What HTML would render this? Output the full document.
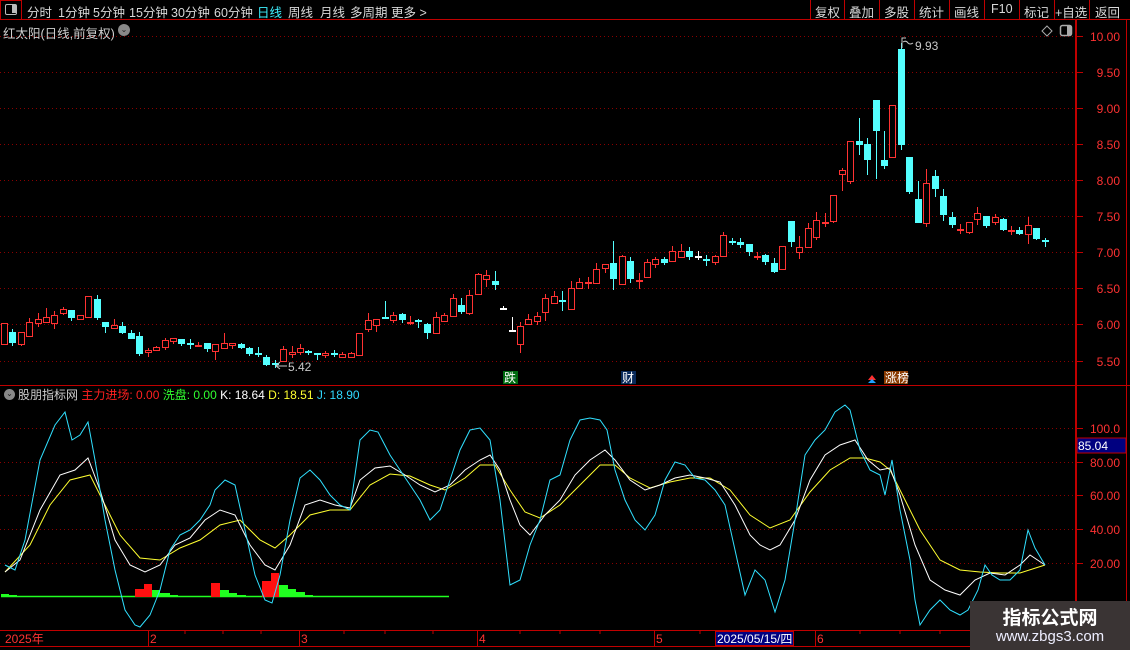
<!DOCTYPE html>
<html><head><meta charset="utf-8">
<style>
*{margin:0;padding:0;box-sizing:border-box}
body{width:1130px;height:650px;background:#000;overflow:hidden;position:relative;font-family:"Liberation Sans","Noto Sans CJK SC",sans-serif;color:#d0d0d0}
.tb{position:absolute;left:0;top:0;width:1130px;height:20px;border-bottom:1px solid #c00000}
.tb span{position:absolute;top:2px;font-size:12.5px;color:#d8d8d8;white-space:nowrap}
.sep{position:absolute;top:0;width:1px;height:19px;background:#c00000}
.abs{position:absolute;white-space:nowrap}
svg{position:absolute;left:0;top:0}
</style></head><body>
<div class="tb">
<div style="position:absolute;left:0;top:0;width:22px;height:20px;border:1px solid #c00000"></div>
<div style="position:absolute;left:5px;top:4px;width:12px;height:11px;border:1.5px solid #bbb;border-radius:2px"><div style="position:absolute;right:0;top:0;width:4px;height:8px;background:#bbb"></div></div>
<span style="left:27px">分时</span><span style="left:58px">1分钟</span><span style="left:93px">5分钟</span><span style="left:129px">15分钟</span><span style="left:171px">30分钟</span><span style="left:214px">60分钟</span><span style="left:257px;color:#3ef0ff">日线</span><span style="left:288px">周线</span><span style="left:320px">月线</span><span style="left:350px">多周期</span><span style="left:391px">更多 &gt;</span>
<div class="sep" style="left:810px"></div><div class="sep" style="left:844px"></div><div class="sep" style="left:879px"></div><div class="sep" style="left:914px"></div><div class="sep" style="left:949px"></div><div class="sep" style="left:984px"></div><div class="sep" style="left:1019px"></div><div class="sep" style="left:1054px"></div><div class="sep" style="left:1089px"></div>
<span style="left:815px">复权</span><span style="left:849px">叠加</span><span style="left:884px">多股</span><span style="left:919px">统计</span><span style="left:954px">画线</span><span style="left:991px">F10</span><span style="left:1024px">标记</span><span style="left:1055px">+自选</span><span style="left:1095px">返回</span>
</div>
<div class="abs" style="left:3px;top:23px;font-size:12.5px;color:#d0d0d0">红太阳(日线,前复权)</div>
<div class="abs" style="left:118px;top:24px;width:12px;height:12px;border-radius:50%;background:#888;color:#222;font-size:8px;text-align:center;line-height:12px">⌄</div>
<div class="abs" style="left:4px;top:389px;width:11px;height:11px;border-radius:50%;background:#888;color:#222;font-size:8px;text-align:center;line-height:10px">⌄</div>
<div class="abs" style="left:18px;top:386px;font-size:12px"><span style="color:#ccc">股朋指标网</span> <span style="color:#ff2020">主力进场: 0.00</span> <span style="color:#30ff30">洗盘: 0.00</span> <span style="color:#fff">K: 18.64</span> <span style="color:#ffff30">D: 18.51</span> <span style="color:#30d8ff">J: 18.90</span></div>

<svg width="1130" height="650" viewBox="0 0 1130 650">
<g stroke="#8a0000" stroke-dasharray="1 3" stroke-width="1">
<line x1="0" x2="1075" y1="36.5" y2="36.5"/><line x1="0" x2="1075" y1="72.5" y2="72.5"/><line x1="0" x2="1075" y1="108.5" y2="108.5"/><line x1="0" x2="1075" y1="144.5" y2="144.5"/><line x1="0" x2="1075" y1="180.5" y2="180.5"/><line x1="0" x2="1075" y1="216.5" y2="216.5"/><line x1="0" x2="1075" y1="252.5" y2="252.5"/><line x1="0" x2="1075" y1="288.5" y2="288.5"/><line x1="0" x2="1075" y1="324.5" y2="324.5"/><line x1="0" x2="1075" y1="361.5" y2="361.5"/>
<line x1="0" x2="1075" y1="428.5" y2="428.5"/><line x1="0" x2="1075" y1="462.5" y2="462.5"/><line x1="0" x2="1075" y1="495.5" y2="495.5"/><line x1="0" x2="1075" y1="529.5" y2="529.5"/><line x1="0" x2="1075" y1="563.5" y2="563.5"/>
</g>
<line x1="0" x2="1130" y1="385.5" y2="385.5" stroke="#c00000"/>
<line x1="1076" x2="1076" y1="20" y2="630" stroke="#c00000" stroke-width="2"/>
<line x1="1126.5" x2="1126.5" y1="20" y2="630" stroke="#c00000"/>
<line x1="0" x2="1130" y1="630.5" y2="630.5" stroke="#c00000"/>
<line x1="0" x2="1130" y1="646.5" y2="646.5" stroke="#c00000"/>
<g stroke="#c00000"><line x1="148.5" x2="148.5" y1="631" y2="646"/><line x1="299.5" x2="299.5" y1="631" y2="646"/><line x1="477.5" x2="477.5" y1="631" y2="646"/><line x1="654.5" x2="654.5" y1="631" y2="646"/><line x1="815.5" x2="815.5" y1="631" y2="646"/><line x1="185" x2="185" y1="631" y2="634"/><line x1="223" x2="223" y1="631" y2="634"/><line x1="261" x2="261" y1="631" y2="634"/><line x1="344" x2="344" y1="631" y2="634"/><line x1="385" x2="385" y1="631" y2="634"/><line x1="433" x2="433" y1="631" y2="634"/><line x1="520" x2="520" y1="631" y2="634"/><line x1="560" x2="560" y1="631" y2="634"/><line x1="600" x2="600" y1="631" y2="634"/><line x1="700" x2="700" y1="631" y2="634"/><line x1="860" x2="860" y1="631" y2="634"/><line x1="900" x2="900" y1="631" y2="634"/><line x1="940" x2="940" y1="631" y2="634"/></g>
<g stroke="#c00000"><line x1="1077" x2="1083" y1="36.5" y2="36.5"/><line x1="1077" x2="1083" y1="72.5" y2="72.5"/><line x1="1077" x2="1083" y1="108.5" y2="108.5"/><line x1="1077" x2="1083" y1="144.5" y2="144.5"/><line x1="1077" x2="1083" y1="180.5" y2="180.5"/><line x1="1077" x2="1083" y1="216.5" y2="216.5"/><line x1="1077" x2="1083" y1="252.5" y2="252.5"/><line x1="1077" x2="1083" y1="288.5" y2="288.5"/><line x1="1077" x2="1083" y1="324.5" y2="324.5"/><line x1="1077" x2="1083" y1="361.5" y2="361.5"/><line x1="1077" x2="1083" y1="428.5" y2="428.5"/><line x1="1077" x2="1083" y1="462.5" y2="462.5"/><line x1="1077" x2="1083" y1="495.5" y2="495.5"/><line x1="1077" x2="1083" y1="529.5" y2="529.5"/><line x1="1077" x2="1083" y1="563.5" y2="563.5"/></g>
<g fill="#ff3232" font-size="12" font-family="Liberation Sans,sans-serif" text-anchor="end">
<text x="1120" y="41">10.00</text><text x="1120" y="77">9.50</text><text x="1120" y="113">9.00</text><text x="1120" y="149">8.50</text><text x="1120" y="185">8.00</text><text x="1120" y="221">7.50</text><text x="1120" y="257">7.00</text><text x="1120" y="293">6.50</text><text x="1120" y="329">6.00</text><text x="1120" y="366">5.50</text>
<text x="1120" y="433">100.0</text><text x="1120" y="467">80.00</text><text x="1120" y="500">60.00</text><text x="1120" y="534">40.00</text><text x="1120" y="568">20.00</text>
</g>
<rect x="1077" y="438" width="49" height="15" fill="#000080" stroke="#c00000"/>
<text x="1078" y="450" fill="#fff" font-size="12" font-family="Liberation Sans,sans-serif">85.04</text>
<g fill="#ff3232" font-size="12" font-family="Liberation Sans,'Noto Sans CJK SC',sans-serif">
<text x="5" y="643">2025年</text><text x="150" y="643">2</text><text x="301" y="643">3</text><text x="479" y="643">4</text><text x="656" y="643">5</text><text x="817" y="643">6</text></g>
<rect x="715.5" y="631.5" width="78" height="14" fill="#000080" stroke="#c00000"/>
<text x="717" y="643" fill="#fff" font-size="12" font-family="Liberation Sans,'Noto Sans CJK SC',sans-serif">2025/05/15/四</text>
<path d="M1047 26 L1052 31 L1047 36 L1042 31Z" fill="none" stroke="#aaa"/>
<rect x="1060.5" y="25.5" width="11" height="10" rx="2" fill="none" stroke="#aaa" stroke-width="1.5"/><rect x="1067" y="26" width="4" height="9" fill="#aaa"/>
<g id="cd"></g>
<g fill="#c8c8c8" font-size="12" font-family="Liberation Sans,sans-serif">
<text x="915" y="50">9.93</text><path d="M902 48 V38 H906 M903 42 Q906 40 908 43 Q910 45 913 43" stroke="#c8c8c8" fill="none"/>
<text x="288" y="371">5.42</text><path d="M276 366 H287 M276 366 L280 362 M276 366 L280 369" stroke="#c8c8c8" fill="none"/>
</g>
<rect x="503" y="371" width="15" height="13" fill="#006a10"/><text x="504" y="382" fill="#fff" font-size="12" font-family="'Noto Sans CJK SC',sans-serif">跌</text>
<rect x="621" y="371" width="15" height="13" fill="#0a2a5a"/><text x="622" y="382" fill="#fff" font-size="12" font-family="'Noto Sans CJK SC',sans-serif">财</text>
<path d="M872 375 L876 380 H868Z" fill="#ff3030"/><path d="M872 379 L876 383 H868Z" fill="#20a0ff"/>
<rect x="884" y="371" width="24" height="13" fill="#8a3a00"/><text x="885" y="382" fill="#fff" font-size="12" font-family="'Noto Sans CJK SC',sans-serif">涨榜</text>
<line x1="1" x2="449" y1="596.5" y2="596.5" stroke="#20ff20" stroke-width="1.5"/>
<g fill="#20ff20"><rect x="1" y="594" width="8" height="3"/><rect x="9" y="595" width="8" height="2"/><rect x="152" y="590" width="8" height="7"/><rect x="160" y="593" width="10" height="4"/><rect x="170" y="595" width="8" height="2"/><rect x="220" y="590" width="9" height="7"/><rect x="229" y="593" width="8" height="4"/><rect x="237" y="595" width="9" height="2"/><rect x="279" y="585" width="9" height="12"/><rect x="288" y="589" width="8" height="8"/><rect x="296" y="592" width="9" height="5"/><rect x="305" y="595" width="8" height="2"/></g>
<g fill="#ff1010"><rect x="135" y="589" width="9" height="8"/><rect x="144" y="584" width="8" height="13"/><rect x="211" y="583" width="9" height="14"/><rect x="262" y="581" width="9" height="16"/><rect x="271" y="573" width="8" height="24"/></g>
<polyline fill="none" stroke="#ffff30" stroke-width="1" points="5,572 30,545 50,505 70,480 90,475 105,505 120,535 140,558 160,560 180,548 200,540 220,525 240,520 260,540 275,548 290,535 310,515 330,510 350,510 370,485 390,474 410,476 430,485 445,490 465,478 480,465 495,465 510,490 525,512 540,518 560,505 580,485 600,465 615,465 630,478 650,488 670,482 690,478 710,478 730,490 750,515 770,528 790,520 810,492 830,470 850,458 865,458 880,462 890,470 905,500 920,530 940,560 960,570 980,572 1000,573 1020,573 1045,565"/>
<polyline fill="none" stroke="#fff" stroke-width="1" points="5,572 20,560 40,510 60,475 75,470 88,458 100,490 115,540 130,565 145,572 160,565 175,545 190,538 205,520 220,510 235,515 250,545 265,565 275,570 290,545 305,505 320,500 335,505 350,508 360,480 375,468 390,466 405,475 420,485 435,492 450,485 465,470 480,460 490,455 500,470 510,500 520,525 530,535 545,515 560,500 575,475 590,460 605,450 615,460 630,480 645,490 660,485 675,478 690,475 705,478 720,482 735,505 750,535 760,545 770,550 780,545 795,520 810,480 825,455 840,445 855,440 868,460 880,470 890,468 900,495 915,545 930,580 945,590 960,595 975,580 990,573 1005,575 1020,565 1030,555 1045,565"/>
<polyline fill="none" stroke="#30e0ff" stroke-width="1" points="5,565 15,570 25,540 40,460 55,425 65,412 72,440 80,435 88,422 95,460 105,520 115,570 125,610 135,625 140,627 150,615 160,590 170,550 180,535 190,530 200,520 210,505 215,490 225,480 235,485 245,530 255,575 265,600 272,603 280,575 290,520 300,478 310,470 320,480 330,495 340,505 350,510 360,440 370,430 378,432 390,455 400,470 410,485 420,500 430,520 440,510 450,480 460,450 470,430 480,428 490,440 500,500 510,585 520,580 530,545 540,520 550,480 560,475 570,440 580,420 590,418 600,420 607,430 615,470 625,500 635,520 645,530 655,515 665,480 675,462 685,465 695,478 705,480 715,490 725,505 735,550 745,595 755,570 765,580 775,612 785,580 795,520 805,455 815,440 825,430 835,412 845,405 850,410 860,450 870,470 880,475 885,495 892,460 900,510 910,560 915,600 920,625 930,610 940,600 950,610 960,615 968,610 978,590 985,565 992,575 1000,580 1010,580 1020,570 1028,530 1035,548 1045,565"/>
</svg>
<script>
var d="4 r 323 344 323 344|12 c 332 342 329 345|21 r 332 344 332 345|29 r 322 336 318 336|38 r 319 323 313 326|46 r 317 322 308 322|54 r 315 323 311 328|63 r 309 313 307 314|71 c 310 317 310 320|80 r 315 319 315 319|88 r 296 317 296 317|97 c 299 317 295 319|105 c 322 326 322 332|114 r 325 328 319 328|122 c 326 332 322 333|131 c 333 338 330 338|139 c 336 353 332 355|148 r 350 352 348 356|156 r 347 350 346 350|165 r 340 347 338 349|173 r 338 341 338 343|181 c 339 343 339 345|190 c 343 343 339 348|198 r 345 345 342 346|207 c 343 348 343 351|215 r 344 351 344 359|224 r 343 348 333 348|232 r 343 345 343 348|241 c 344 347 343 348|249 c 348 353 347 355|258 c 353 353 347 356|266 c 357 364 355 365|275 c 363 363 360 367|283 r 349 361 346 361|292 r 352 354 346 357|300 r 348 352 344 354|308 c 351 352 350 354|317 c 353 353 353 359|325 r 353 355 351 357|334 c 353 353 350 356|342 r 354 357 352 357|351 r 353 357 352 357|359 r 333 355 333 355|368 r 320 329 313 331|376 r 319 325 319 331|385 c 317 317 301 318|393 r 315 320 312 322|402 c 314 319 313 322|410 r 322 322 316 324|418 c 320 320 319 327|427 c 324 332 323 338|436 r 317 333 312 333|444 r 315 321 313 321|453 r 298 316 294 316|461 c 305 311 298 313|469 r 295 313 290 314|478 r 274 294 273 294|486 r 275 279 270 286|495 c 281 284 271 289|503 w 308 308 306 308|512 w 330 330 317 330|520 r 326 344 322 352|528 r 319 324 314 324|537 r 316 321 312 324|545 r 298 312 294 320|554 r 296 303 291 303|562 c 300 300 291 310|571 r 288 309 281 309|579 r 282 288 278 288|588 r 282 282 277 288|596 r 269 283 263 283|605 r 264 268 264 272|613 c 263 278 241 289|622 r 256 284 255 284|630 c 261 278 257 282|639 r 280 280 273 288|647 r 262 277 259 277|655 r 259 264 257 267|664 c 259 262 257 264|672 r 251 261 246 261|681 r 251 257 244 257|689 c 251 256 247 259|698 w 256 256 251 259|706 c 259 259 255 265|715 r 256 262 255 264|723 r 235 256 232 256|732 c 241 241 238 244|740 c 242 244 238 247|749 c 244 251 244 255|757 r 256 256 252 259|765 c 255 261 254 264|774 c 263 271 258 272|782 r 246 269 246 269|791 c 221 241 221 246|799 r 247 252 236 258|808 r 228 247 223 247|816 r 220 237 212 239|825 r 222 222 213 226|833 r 195 221 195 222|842 r 170 174 168 190|850 r 141 181 141 183|859 c 141 144 118 154|867 c 144 159 138 174|876 c 100 130 100 178|884 c 160 165 131 168|892 r 105 157 105 157|901 c 49 144 43 149|909 c 157 191 157 193|918 c 199 222 181 222|926 r 183 223 169 226|935 c 176 188 170 196|943 c 196 214 189 220|952 c 217 224 212 227|960 r 229 229 224 233|969 r 222 232 222 233|977 r 213 219 207 224|986 c 216 225 216 227|995 r 217 222 214 224|1003 c 219 229 218 230|1011 r 230 230 226 234|1019 c 230 233 227 234|1028 r 225 234 217 243|1036 c 228 238 228 239|1045 c 240 240 238 246";
var s="";d.split("|").forEach(function(e){var a=e.split(" "),x=+a[0],t=a[1],bt=+a[2],bb=+a[3],wt=+a[4],wb=+a[5];
var col=t=="r"?"#ff3232":t=="c"?"#54ffff":"#ffffff";
s+='<line x1="'+(x+.5)+'" x2="'+(x+.5)+'" y1="'+wt+'" y2="'+(wb+1)+'" stroke="'+col+'"/>';
if(bb-bt<2){s+='<rect x="'+(x-3)+'" y="'+bt+'" width="7" height="2" fill="'+col+'"/>';}
else if(t=="r"){s+='<rect x="'+(x-2.5)+'" y="'+(bt+.5)+'" width="6" height="'+(bb-bt)+'" fill="#000" stroke="'+col+'"/>';}
else{s+='<rect x="'+(x-3)+'" y="'+bt+'" width="7" height="'+(bb-bt+1)+'" fill="'+col+'"/>';}
});document.getElementById("cd").innerHTML=s;
</script>
<div class="abs" style="left:970px;top:601px;width:160px;height:49px;background:#3a3434;text-align:center">
<div style="font-size:19px;font-weight:bold;color:#fff;margin-top:2px;font-family:'Noto Sans CJK SC',sans-serif">指标公式网</div>
<div style="font-size:15px;color:#eef;margin-top:-2px;font-family:'Liberation Sans',sans-serif">www.zbgs3.com</div>
</div>
</body></html>
